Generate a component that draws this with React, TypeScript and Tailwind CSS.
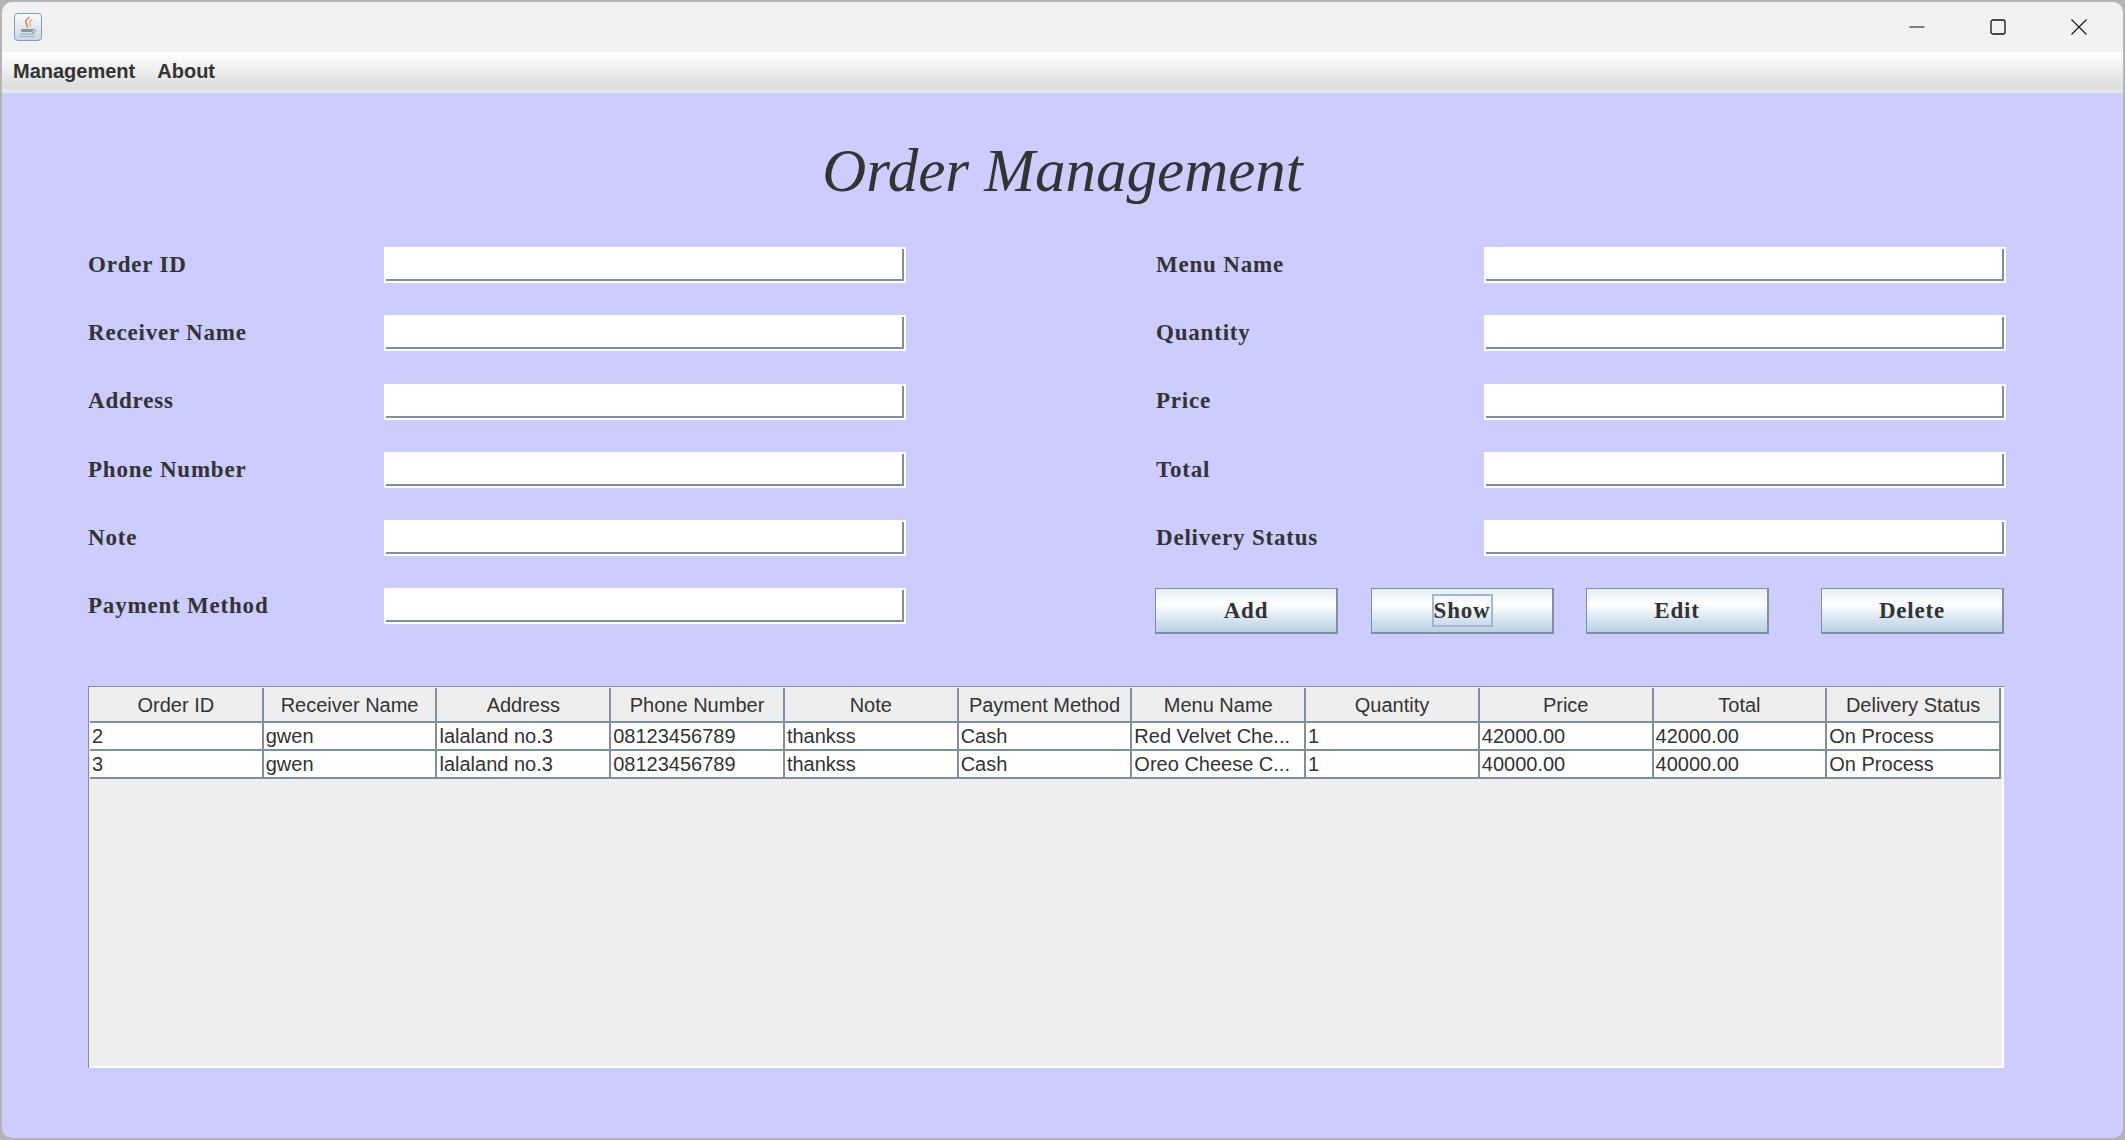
import React from 'react';

const leftFields = ['Order ID', 'Receiver Name', 'Address', 'Phone Number', 'Note', 'Payment Method'];
const rightFields = ['Menu Name', 'Quantity', 'Price', 'Total', 'Delivery Status'];
const columns = ['Order ID', 'Receiver Name', 'Address', 'Phone Number', 'Note', 'Payment Method', 'Menu Name', 'Quantity', 'Price', 'Total', 'Delivery Status'];
const rows = [
  ['2', 'gwen', 'lalaland no.3', '08123456789', 'thankss', 'Cash', 'Red Velvet Che...', '1', '42000.00', '42000.00', 'On Process'],
  ['3', 'gwen', 'lalaland no.3', '08123456789', 'thankss', 'Cash', 'Oreo Cheese C...', '1', '40000.00', '40000.00', 'On Process'],
];

const JavaIcon = () => (
  <svg width="28" height="28" viewBox="0 0 28 28">
    <defs>
      <linearGradient id="javaBg" x1="0" y1="0" x2="0" y2="1">
        <stop offset="0" stopColor="#fbfdff" />
        <stop offset="1" stopColor="#c9d6e2" />
      </linearGradient>
    </defs>
    <rect x="0.5" y="0.5" width="27" height="27" rx="3.5" fill="url(#javaBg)" stroke="#7f9bb6" />
    <path d="M15.5 4c-3 2-4.500 3.500-3.500 6 .6 1.500 1.500 2.500 1 4.500" fill="none" stroke="#e8792b" strokeWidth="1.500" />
    <path d="M18.500 6.500c-2.500 1-3.500 2.500-2.800 4.300.4 1 .8 2 .4 3.200" fill="none" stroke="#f0a060" strokeWidth="1.200" />
    <path d="M7 16h12c0 1 0 2-.5 3H7.500C7 18 7 17 7 16z" fill="#7d97ad" />
    <path d="M19 16.500c2 0 3 .5 2.500 1.500s-2 1.500-3.500 1.500" fill="none" stroke="#7d97ad" strokeWidth="1" />
    <path d="M6 21h15" stroke="#8ea5b9" strokeWidth="1.200" />
    <path d="M5 23.500h16" stroke="#a3b6c6" strokeWidth="1.200" />
  </svg>
);

const Field = () => (
  <div className="h-full w-full bg-white p-[2px]">
    <input className="block h-full w-full border-r-2 border-b-2 border-[#7f8fa0] bg-white outline-none" />
  </div>
);

const FormRow = ({ label, labelClass }: { label: string; labelClass: string }) => (
  <div className="flex h-[36px] items-center">
    <label className={`${labelClass} shrink-0 text-[23px] font-bold tracking-[0.8px] text-[#333333] [font-family:'Liberation_Serif',serif]`}>{label}</label>
    <div className="h-full flex-1">
      <Field />
    </div>
  </div>
);

const ActionButton = ({ label, focused, className }: { label: string; focused?: boolean; className?: string }) => (
  <button className={`flex h-[46px] w-[183px] items-center justify-center border border-r-2 border-b-2 border-[#7f8fa0] bg-gradient-to-b from-[#e4eef5] via-white via-[35%] to-[#b8cfe3] text-[23px] font-bold tracking-[0.8px] text-[#333333] [font-family:'Liberation_Serif',serif] ${className ?? ''}`}>
    <span className={focused ? 'flex h-[33px] w-[61px] items-center justify-center border-2 border-[#a3b8cc]' : ''}>{label}</span>
  </button>
);

export default function App() {
  return (
    <div className="h-[1140px] w-[2125px] overflow-hidden bg-[#b4b4b4] px-[2px] pt-[2px] [font-family:'Liberation_Sans',sans-serif]">
      <div className="flex h-[1136px] flex-col overflow-hidden rounded-[10px]">
        {/* Title bar */}
        <div className="flex h-[50px] shrink-0 items-center justify-between bg-[#f2f2f2] pl-[12px]">
          <JavaIcon />
          <div className="flex items-center text-black">
            <div className="flex h-[50px] w-[81px] items-center justify-center">
              <svg width="16" height="16" viewBox="0 0 16 16"><path d="M0.500 8h15" stroke="#111" strokeWidth="1" /></svg>
            </div>
            <div className="flex h-[50px] w-[81px] items-center justify-center">
              <svg width="16" height="16" viewBox="0 0 16 16"><rect x="1" y="1" width="14" height="14" rx="2" fill="none" stroke="#111" strokeWidth="1.300" /></svg>
            </div>
            <div className="mr-[4px] flex h-[50px] w-[81px] items-center justify-center">
              <svg width="16" height="16" viewBox="0 0 16 16"><path d="M0.500 0.500l15 15M15.500 0.500l-15 15" stroke="#111" strokeWidth="1.100" /></svg>
            </div>
          </div>
        </div>

        {/* Menu bar */}
        <div className="flex h-[41px] shrink-0 items-start border-b-[4px] border-[#e6e6e6] bg-gradient-to-b from-white to-[#dcdcdc] pl-[11px] pt-[9px] text-[20px] leading-[20px] font-bold text-[#333333]">
          <span>Management</span>
          <span className="ml-[22px]">About</span>
        </div>

        {/* Content */}
        <div className="flex-1 bg-[#ccccff] pl-[86px]">
          <h1 className="flex h-[154px] items-start justify-center pt-[43px] pr-[86px] text-[61px] leading-[70px] font-normal italic text-[#333333] [font-family:'Liberation_Serif',serif]">
            Order Management
          </h1>

          <div className="flex">
            <div className="flex w-[818px] flex-col gap-y-[32.3px]">
              {leftFields.map((f) => (
                <FormRow key={f} label={f} labelClass="w-[296px]" />
              ))}
            </div>
            <div className="ml-[249px] flex w-[851px] flex-col gap-y-[32.3px]">
              {rightFields.map((f) => (
                <FormRow key={f} label={f} labelClass="w-[329px] pl-px" />
              ))}
              <div className="flex">
                <ActionButton label="Add" />
                <ActionButton label="Show" focused className="ml-[33px]" />
                <ActionButton label="Edit" className="ml-[32px]" />
                <ActionButton label="Delete" className="ml-[52px]" />
              </div>
            </div>
          </div>

          {/* Table */}
          <div className="mt-[52px] h-[382px] w-[1916px] border-t border-l border-[#7f8fa0] bg-[#eeeeee] shadow-[inset_-2px_-2px_0_#ffffff]">
            <div className="grid w-[1912px] grid-cols-11 pl-px pt-px">
              {columns.map((c) => (
                <div key={c} className="flex h-[35px] items-center justify-center border-r-2 border-b-2 border-[#7f8fa0] border-t-white text-[20px] text-[#333333]">
                  {c}
                </div>
              ))}
            </div>
            {rows.map((row) => (
              <div key={row[0]} className="grid w-[1912px] grid-cols-11 pl-px">
                {row.map((cell, i) => (
                  <div key={i} className="flex h-[28px] items-center overflow-hidden border-r-2 border-b-2 border-[#7f8fa0] bg-white pl-[2px] text-[20px] whitespace-nowrap text-[#333333]">
                    {cell}
                  </div>
                ))}
              </div>
            ))}
          </div>
        </div>
      </div>
    </div>
  );
}
